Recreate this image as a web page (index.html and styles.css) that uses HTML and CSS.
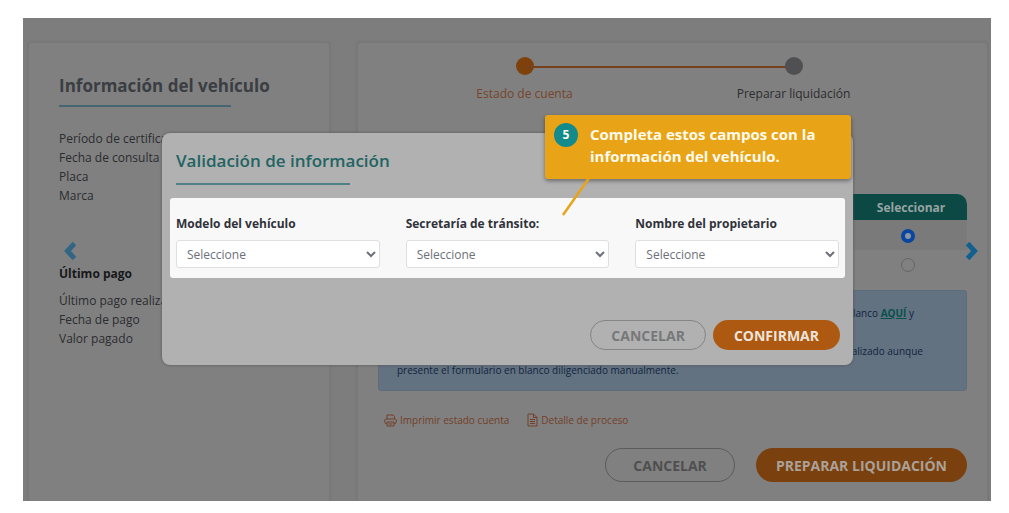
FILE: index.html
```html
<!DOCTYPE html>
<html lang="es">
<head>
<meta charset="utf-8">
<title>Validación de información</title>
<link rel="stylesheet" href="styles.css">
</head>
<body>
<main class="stage">
  <section class="card vehicle">
    <h2 class="card-title">Información del vehículo</h2>
    <ul class="facts">
      <li>Período de certificado</li>
      <li>Fecha de consulta</li>
      <li>Placa</li>
      <li>Marca</li>
    </ul>
    <h3 class="subtitle">Último pago</h3>
    <ul class="facts">
      <li>Último pago realizado</li>
      <li>Fecha de pago</li>
      <li>Valor pagado</li>
    </ul>
    <button class="arrow arrow-prev" type="button" aria-label="Anterior">
      <svg width="12" height="20" viewBox="0 0 12 20"><path d="M10.500 2.500 3.500 10l7 7.500" fill="none" stroke="currentColor" stroke-width="5"/></svg>
    </button>
  </section>

  <section class="card account">
    <ol class="steps">
      <li class="step step-active"><span class="dot"></span>Estado de cuenta</li>
      <li class="step"><span class="dot"></span>Preparar liquidación</li>
    </ol>
    <table class="periods">
      <thead><tr><th></th><th class="pick">Seleccionar</th></tr></thead>
      <tbody>
        <tr><td></td><td class="pick"><input class="radio" type="radio" name="periodo" aria-label="Primer período" checked></td></tr>
        <tr><td></td><td class="pick"><input class="radio" type="radio" name="periodo" aria-label="Segundo período"></td></tr>
      </tbody>
    </table>
    <div class="notice">
      <p class="notice-first">blanco <a class="here" href="#">AQUÍ</a> y</p>
      <p class="notice-second">realizado aunque</p>
      <p>presente el formulario en blanco diligenciado manualmente.</p>
    </div>
    <div class="links">
      <a class="link" href="#">
        <svg width="13" height="13" viewBox="0 0 13 13" fill="none" stroke="currentColor"><path d="M3 5V1h6l1.500 1.500V5M3 9.500H1.500L.7 8V6l1-1h9.600l1 1v2l-.8 1.500H10M3 8h7v4H3zM4.500 10h4"/></svg>
        Imprimir estado cuenta</a>
      <a class="link" href="#">
        <svg width="11" height="14" viewBox="0 0 11 14" fill="none" stroke="currentColor"><path d="M1 1h5.500L10 4.500V13H1zM6.500 1v3.500H10M3 6.500h5M3 8.500h5M3 10.500h5"/></svg>
        Detalle de proceso</a>
    </div>
    <div class="actions">
      <button class="btn btn-outline" type="button">CANCELAR</button>
      <button class="btn btn-solid" type="button">PREPARAR LIQUIDACIÓN</button>
    </div>
    <button class="arrow arrow-next" type="button" aria-label="Siguiente">
      <svg width="12" height="20" viewBox="0 0 12 20"><path d="M1.500 2.500l7 7.500-7 7.500" fill="none" stroke="currentColor" stroke-width="5"/></svg>
    </button>
  </section>

  <div class="modal" role="dialog" aria-labelledby="modal-title">
    <h2 class="modal-title" id="modal-title">Validación de información</h2>
    <form class="fields">
      <div class="field">
        <label for="modelo">Modelo del vehículo</label>
        <select id="modelo"><option>Seleccione</option></select>
      </div>
      <div class="field">
        <label for="secretaria">Secretaría de tránsito:</label>
        <select id="secretaria"><option>Seleccione</option></select>
      </div>
      <div class="field">
        <label for="nombre">Nombre del propietario</label>
        <select id="nombre"><option>Seleccione</option></select>
      </div>
    </form>
    <div class="modal-actions">
      <button class="btn btn-outline" type="button">CANCELAR</button>
      <button class="btn btn-solid" type="button">CONFIRMAR</button>
    </div>
    <aside class="callout">
      <span class="number">5</span>
      <p class="callout-text">Completa estos campos con la información del vehículo.</p>
      <svg class="pointer" width="32" height="40" viewBox="0 0 32 40"><path d="M29 1 3 38" stroke="#e8a317" stroke-width="2.500"/></svg>
    </aside>
  </div>
</main>
</body>
</html>
```
FILE: styles.css
```css
* { box-sizing: border-box; }

body {
  margin: 0;
  padding: 18px 18px 12px 23px;
  min-height: 100vh;
  display: flex;
  background: #fff;
  font-family: "Open Sans", "Noto Sans", sans-serif;
  font-size: 12px;
  color: #2b2c2f;
}

h2, h3, p, ul, ol { margin: 0; padding: 0; }
ul, ol { list-style: none; }
button, select, input { font-family: inherit; margin: 0; }

.stage {
  position: relative;
  flex: 1;
  display: grid;
  grid-template-columns: 302fr 631fr;
  gap: 27px;
  padding: 24px 3px 0 5px;
  background: #7d7d7d;
  overflow: hidden;
}

.card {
  position: relative;
  background: #808080;
  border: 1px solid #787878;
  border-bottom: 0;
  border-radius: 3px 3px 0 0;
  box-shadow: 0 0 3px #727272;
}

.vehicle { padding: 31px 30px; }

.card-title {
  font-size: 17px;
  line-height: 24px;
  color: #3a3e43;
  white-space: nowrap;
}

.card-title::after {
  content: "";
  display: block;
  width: 172px;
  height: 2px;
  margin-top: 7px;
  background: #456670;
}

.facts { font-size: 12px; line-height: 19px; white-space: nowrap; }
.card-title + .facts { margin-top: 22px; }

.subtitle {
  margin: 59px 0 7px;
  font-size: 12px;
  line-height: 20px;
  color: #17181a;
}

.arrow {
  position: absolute;
  top: 198px;
  padding: 0;
  border: 0;
  background: none;
  line-height: 0;
}
.arrow-prev { left: 35px; color: #326584; }
.arrow-next { right: 9px; color: #13608f; }

.account { padding: 14px 20px 0; }

.steps {
  display: grid;
  grid-template-columns: 1fr 1fr;
  padding: 0 39px 0 12px;
}

.step {
  position: relative;
  display: flex;
  flex-direction: column;
  align-items: center;
  gap: 9px;
  line-height: 20px;
}

.dot { position: relative; width: 18px; height: 18px; border-radius: 50%; background: #505052; }
.step-active { color: #76452a; }
.step-active .dot { background: #7e410b; }
.step-active::after {
  content: "";
  position: absolute;
  left: 50%;
  top: 9px;
  width: 100%;
  height: 2px;
  background: #77411d;
}
.step + .step .dot { z-index: 1; }

.periods {
  width: 100%;
  margin-top: 90px;
  border-collapse: separate;
  border-spacing: 0;
}
.periods th { height: 26px; padding: 0; background: #0c4844; color: #96a3a2; font-size: 12px; }
.periods th:first-child { border-radius: 10px 0 0; }
.periods th:last-child { border-radius: 0 10px 0 0; }
.periods td { height: 28px; padding: 0 6px 0 0; }
.periods tbody tr:first-child td { background: #7a7a7a; height: 30px; }
.pick { width: 112px; text-align: center; }

.radio {
  appearance: none;
  width: 14px;
  height: 14px;
  vertical-align: middle;
  border: 1px solid #656565;
  border-radius: 50%;
}
.radio:checked { border: 4px solid #0a45a0; background: #8b95a3; }

.notice {
  margin-top: 12px;
  padding: 13px 18px 10px;
  border: 1px solid #5e6d7b;
  border-radius: 3px;
  background: #637280;
  color: #10243f;
  font-size: 10px;
  line-height: 19px;
}
.notice-first { padding-right: 34px; text-align: right; }
.notice-second { margin-top: 19px; padding-right: 25px; text-align: right; }
.here { color: #08504c; font-weight: 700; }

.links {
  display: flex;
  gap: 18px;
  margin-top: 19px;
  padding-left: 6px;
}
.link {
  display: flex;
  align-items: center;
  gap: 3px;
  color: #743f28;
  font-size: 10px;
  line-height: 20px;
  text-decoration: none;
}

.actions { display: flex; justify-content: flex-end; gap: 21px; margin-top: 18px; }

.btn {
  height: 34px;
  padding: 0 20px;
  border: 0;
  border-radius: 17px;
  font-size: 14px;
  font-weight: 700;
  white-space: nowrap;
}
.btn-outline { padding: 0 27px; border: 1px solid #5b5b5b; background: none; color: #4f4f50; }
.btn-solid { background: #7a400d; color: #aaa19a; }

.modal {
  position: absolute;
  left: 139px;
  right: 138px;
  top: 115px;
  padding: 16px 8px 15px;
  border-radius: 8px;
  background: #b1b1b1;
  box-shadow: 0 0 3px #555;
}

.modal-title {
  padding: 0 6px;
  font-size: 17px;
  font-weight: 600;
  line-height: 24px;
  color: #226463;
}
.modal-title::after {
  content: "";
  display: block;
  width: 174px;
  height: 2px;
  margin-top: 10px;
  background: #4d8385;
}

.fields {
  display: grid;
  grid-template-columns: repeat(3, 1fr);
  gap: 26px;
  margin-top: 13px;
  padding: 16px 6px 10px;
  border-radius: 3px;
  background: #f8f8f8;
}
.field { display: flex; flex-direction: column; gap: 6px; }
.field label { font-size: 12px; font-weight: 700; line-height: 20px; color: #303239; }
.field select {
  width: 100%;
  height: 28px;
  padding: 0 3px 0 6px;
  border: 1px solid #dedfe1;
  border-radius: 3px;
  background-color: #fff;
  color: #6c7077;
  font-size: 12px;
}

.modal-actions { display: flex; justify-content: flex-end; gap: 7px; margin-top: 42px; padding-right: 5px; }
.modal-actions .btn { height: 30px; }
.modal-actions .btn-outline { padding: 0 20px; border-color: #858585; color: #77787a; }
.modal-actions .btn-solid { padding: 0 21px; background: #ad5912; color: #ece4dc; }

.callout {
  position: absolute;
  top: -18px;
  right: 2px;
  width: 306px;
  display: flex;
  gap: 12px;
  padding: 8px 9px 12px;
  border-radius: 3px;
  background: #e8a317;
  box-shadow: 0 2px 4px rgba(0, 0, 0, .4);
  color: #fffbed;
}
.number {
  flex: none;
  width: 24px;
  height: 24px;
  border-radius: 50%;
  background: #138b8c;
  font-weight: 700;
  line-height: 24px;
  text-align: center;
}
.callout-text { font-size: 15px; font-weight: 700; line-height: 22px; }
.pointer { position: absolute; left: 15px; top: 62px; }
```
